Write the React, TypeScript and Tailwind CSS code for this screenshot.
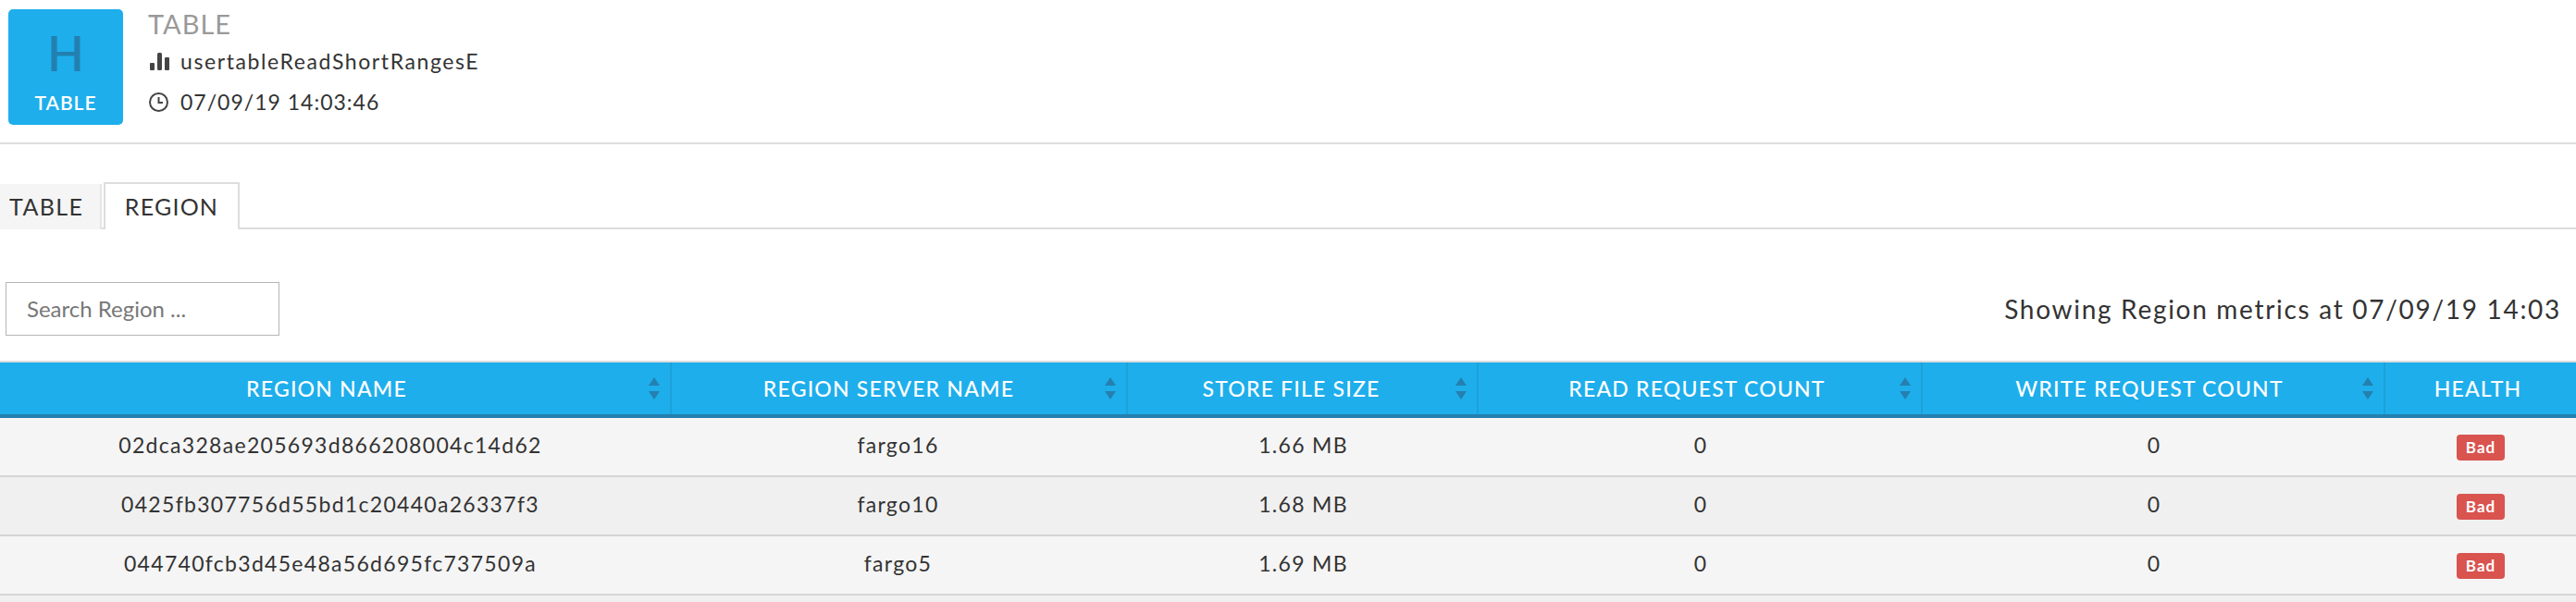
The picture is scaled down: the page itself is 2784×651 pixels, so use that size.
import React from "react";

const grid = "grid grid-cols-[726px_493px_379px_480px_500px_1fr]";

function SortIcon() {
  return (
    <svg className="absolute right-[11px] top-[16px]" width="12" height="24" viewBox="0 0 12 24" aria-hidden="true">
      <path d="M6 0L12 9H0Z" fill="#2580af" />
      <path d="M0 15H12L6 24Z" fill="#2580af" />
    </svg>
  );
}

const heads: [string, boolean, string][] = [
  ["REGION NAME", true, "pr-[18px]"],
  ["REGION SERVER NAME", true, "pr-[22px]"],
  ["STORE FILE SIZE", true, "pr-[24px]"],
  ["READ REQUEST COUNT", true, "pr-[6px]"],
  ["WRITE REQUEST COUNT", true, "pr-[8px]"],
  ["HEALTH", false, "pr-[6px]"],
];

const rows = [
  ["02dca328ae205693d866208004c14d62", "fargo16", "1.66 MB", "0", "0", "bg-[#f5f5f5]"],
  ["0425fb307756d55bd1c20440a26337f3", "fargo10", "1.68 MB", "0", "0", "bg-[#f0f0f0]"],
  ["044740fcb3d45e48a56d695fc737509a", "fargo5", "1.69 MB", "0", "0", "bg-[#f5f5f5]"],
];

export default function App() {
  return (
    <div className="h-[651px] w-full overflow-hidden bg-white flex flex-col font-['Lato',sans-serif] text-[#333]">
      <header className="flex h-[156px] shrink-0 border-b-2 border-[#ddd] pl-[9px] pt-[10px]">
        <div className="flex h-[125px] w-[124px] flex-col items-center rounded-[5px] bg-[#1eaeec]">
          <span className="mt-[16px] text-[52px] font-semibold leading-[62px] text-[#2280b0]">H</span>
          <span className="mt-[11px] text-[21px] font-semibold leading-[24px] tracking-[1px] text-white">TABLE</span>
        </div>
        <div className="ml-[27px] flex flex-col">
          <div className="-mt-[1px] text-[29px] leading-[34px] tracking-[1px] text-[#999]">TABLE</div>
          <div className="mt-[11px] flex h-[24px] items-center">
            <svg width="21" height="19" viewBox="0 0 21 19" className="ml-[2px]" aria-hidden="true">
              <rect x="0" y="11" width="5" height="8" rx="1" fill="#444" />
              <rect x="8" y="0" width="5" height="19" rx="1.5" fill="#444" />
              <rect x="16" y="5" width="5" height="14" rx="1" fill="#444" />
            </svg>
            <span className="ml-[12px] text-[23px] leading-[24px] tracking-[1.6px]">usertableReadShortRangesE</span>
          </div>
          <div className="mt-[20px] flex h-[24px] items-center">
            <svg width="21" height="21" viewBox="0 0 21 21" className="ml-[1px]" aria-hidden="true" fill="none" stroke="#444" strokeWidth="2">
              <circle cx="10.5" cy="10.5" r="9.5" />
              <path d="M10.5 5V11H15" />
            </svg>
            <span className="ml-[13px] text-[23px] leading-[24px] tracking-[1px]">07/09/19 14:03:46</span>
          </div>
        </div>
      </header>

      <nav className="mt-[41px] flex h-[51px] shrink-0 border-b-2 border-[#ddd]">
        <div className="mt-[2px] flex h-[49px] w-[110px] items-center border-r-2 border-[#e5e5e5] bg-[#f5f5f5] pl-[10px] text-[25px] tracking-[1.4px]">
          TABLE
        </div>
        <div className="relative -mb-[2px] ml-[2px] flex h-[51px] w-[147px] items-center justify-center border-x-2 border-t-2 border-[#ddd] bg-white text-[25px] tracking-[1.2px]">
          REGION
        </div>
      </nav>

      <div className="mt-[57px] flex h-[58px] shrink-0 items-center justify-between pl-[6px] pr-[16px]">
        <div className="flex h-[58px] w-[296px] items-center border border-[#b5b5b5] px-[22px] text-[24px] text-[#777]">
          Search Region ...
        </div>
        <div className="text-[28px] tracking-[1.7px]">Showing Region metrics at 07/09/19 14:03</div>
      </div>

      <div className="mt-[27px] flex min-h-0 flex-1 flex-col border-t-2 border-[#ddd]">
        <div className={`${grid} h-[60px] shrink-0 border-b-4 border-[#2480ad] bg-[#1eaeec] text-[23px] font-medium tracking-[1.2px] text-white`}>
          {heads.map(([label, sortable, pad], i) => (
            <div key={label} className={`relative flex items-center justify-center pt-[1px] ${pad} ${i < 5 ? "border-r-2 border-[#1fa0d8]" : ""}`}>
              {label}
              {sortable && <SortIcon />}
            </div>
          ))}
        </div>
        {rows.map((r, i) => (
          <div key={i} className={`${grid} h-[64px] shrink-0 border-b-2 border-[#d5d5d5] ${r[5]} text-[23px] tracking-[1.3px]`}>
            <div className="flex items-center justify-center pb-[3px] pr-[12px]">{r[0]}</div>
            <div className="flex items-center justify-center pb-[3px] pr-[4px]">{r[1]}</div>
            <div className="flex items-center justify-center pb-[3px]">{r[2]}</div>
            <div className="flex items-center justify-center pb-[3px]">{r[3]}</div>
            <div className="flex items-center justify-center pb-[3px]">{r[4]}</div>
            <div className="flex items-center justify-center pt-[2px]">
              <span className="flex h-[28px] w-[52px] items-center justify-center rounded-[4px] bg-[#d9534f] text-[17px] font-bold tracking-[1px] text-white">
                Bad
              </span>
            </div>
          </div>
        ))}
        <div className="flex-1 bg-[#f0f0f0]" />
      </div>
    </div>
  );
}
